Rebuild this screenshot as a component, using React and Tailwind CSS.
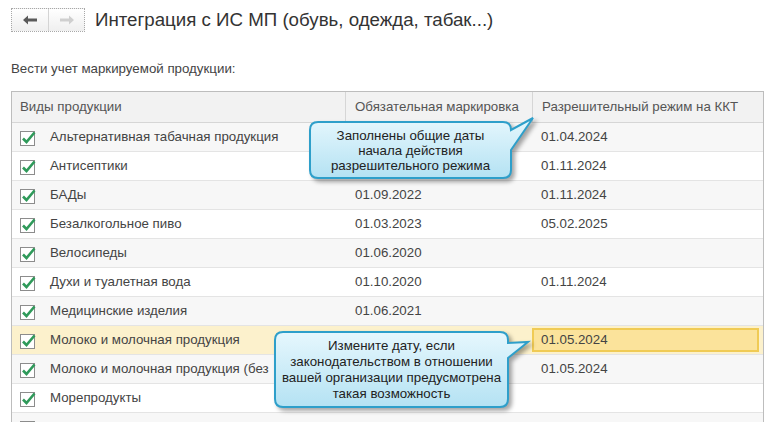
import React from 'react';

const rows = [
  { name: 'Альтернативная табачная продукция', mark: '', kkt: '01.04.2024' },
  { name: 'Антисептики', mark: '', kkt: '01.11.2024' },
  { name: 'БАДы', mark: '01.09.2022', kkt: '01.11.2024' },
  { name: 'Безалкогольное пиво', mark: '01.03.2023', kkt: '05.02.2025' },
  { name: 'Велосипеды', mark: '01.06.2020', kkt: '' },
  { name: 'Духи и туалетная вода', mark: '01.10.2020', kkt: '01.11.2024' },
  { name: 'Медицинские изделия', mark: '01.06.2021', kkt: '' },
  { name: 'Молоко и молочная продукция', mark: '', kkt: '01.05.2024', active: true },
  { name: 'Молоко и молочная продукция (без', mark: '', kkt: '01.05.2024' },
  { name: 'Морепродукты', mark: '', kkt: '' },
  { name: 'Никотинсодержащая продукция', mark: '01.03.2023', kkt: '01.04.2024' },
];

const CheckBox = () => (
  <svg width="17" height="17" viewBox="0 0 17 17" className="shrink-0">
    <rect x="0.5" y="2.5" width="14" height="14" fill="#fff" stroke="#8c8c8c" />
    <path d="M3 9.5 L6.5 13 L14.5 3.5" fill="none" stroke="#2f9a5a" strokeWidth="2.6" strokeLinejoin="miter" />
  </svg>
);

const Callout = ({ className, box, path, textClass, children }) => (
  <div className={`absolute ${className}`}>
    <svg width={box.w} height={box.h} className="drop-shadow-[3px_3px_2px_rgba(0,0,0,0.35)]">
      <defs>
        <linearGradient id={box.id} x1="0" y1="0" x2="0" y2="1">
          <stop offset="0" stopColor="#e6f7fd" />
          <stop offset="1" stopColor="#b4e2f3" />
        </linearGradient>
      </defs>
      <path d={path} fill={`url(#${box.id})`} stroke="#2e9fca" strokeWidth="2" />
    </svg>
    <div className={`absolute flex flex-col items-center justify-center text-center text-[13.3px] text-[#222] ${textClass}`}>
      {children}
    </div>
  </div>
);

const App = () => {
  return (
    <div className="relative w-[769px] h-[422px] overflow-hidden bg-white font-['Liberation_Sans',Arial,sans-serif] text-[#444]">
      {/* Header */}
      <div className="flex items-center pl-[11px] pt-[8px]">
        <div className="flex h-[24px] w-[74px] border border-dotted border-[#a8a8a8] bg-gradient-to-b from-white to-[#efefef]">
          <div className="flex w-[37px] items-center justify-center border-r border-[#d4d4d4]">
            <svg width="14" height="10" viewBox="0 0 14 10">
              <path d="M0 5 L5 0.5 V3.5 H14 V6.5 H5 V9.5 Z" fill="#5a5a5a" />
            </svg>
          </div>
          <div className="flex flex-1 items-center justify-center">
            <svg width="14" height="10" viewBox="0 0 14 10">
              <path d="M14 5 L9 0.5 V3.5 H0 V6.5 H9 V9.5 Z" fill="#cfcfcf" />
            </svg>
          </div>
        </div>
        <h1 className="ml-[10px] text-[18.7px] leading-[24px] text-[#333]">Интеграция с ИС МП (обувь, одежда, табак...)</h1>
      </div>

      <div className="mt-[29px] pl-[11px] text-[13.3px] leading-[16px] text-[#444]">Вести учет маркируемой продукции:</div>

      {/* Table */}
      <div className="ml-[11px] mt-[14px] w-[753px] border border-[#bdbdbd]">
        <div className="grid h-[31px] grid-cols-[333px_187px_1fr] border-b border-[#d6d6d6] bg-[#f2f2f2] text-[13.3px] text-[#555]">
          <div className="flex items-center pl-[8px]">Виды продукции</div>
          <div className="flex items-center border-l border-[#d6d6d6] pl-[9px]">Обязательная маркировка</div>
          <div className="flex items-center border-l border-[#d6d6d6] pl-[9px]">Разрешительный режим на ККТ</div>
        </div>
        {rows.map((r, i) => (
          <div
            key={r.name}
            className={`grid h-[29px] grid-cols-[333px_187px_1fr] border-b border-[#e4e4e4] text-[13.3px] ${
              r.active ? 'bg-[#fcf1cc]' : i % 2 === 0 ? 'bg-[#f7f7f7]' : 'bg-white'
            }`}
          >
            <div className="flex items-center gap-[13px] pl-[8px]">
              <CheckBox />
              <span className="whitespace-nowrap">{r.name}</span>
            </div>
            <div className="flex items-center pl-[10px]">{r.mark}</div>
            <div className="flex items-center py-[2px] pr-[4px]">
              {r.active ? (
                <div className="flex h-full w-full items-center border-2 border-[#f0cb55] bg-[#fbe39b] pl-[7px]">{r.kkt}</div>
              ) : (
                <span className="pl-[9px]">{r.kkt}</span>
              )}
            </div>
          </div>
        ))}
      </div>

      {/* Callouts */}
      <Callout
        className="left-[308px] top-[112px]"
        box={{ w: 232, h: 76, id: 'g1' }}
        path="M10 10 H195 Q203 10 203 18 L225 6 L203 38 V58 Q203 66 195 66 H10 Q2 66 2 58 V18 Q2 10 10 10 Z"
        textClass="left-[2px] top-[10px] w-[201px] h-[56px] leading-[15px]"
      >
        <span>Заполнены общие даты</span>
        <span>начала действия</span>
        <span>разрешительного режима</span>
      </Callout>

      <Callout
        className="left-[272px] top-[328px]"
        box={{ w: 262, h: 86, id: 'g2' }}
        path="M11 4 H228 Q236 4 236 12 V15 L256 14 L236 30 V71 Q236 79 228 79 H11 Q3 79 3 71 V12 Q3 4 11 4 Z"
        textClass="left-[3px] top-[4px] w-[233px] h-[75px] leading-[16px]"
      >
        <span>Измените дату, если</span>
        <span>законодательством в отношении</span>
        <span>вашей организации предусмотрена</span>
        <span>такая возможность</span>
      </Callout>
    </div>
  );
};

export default App;
